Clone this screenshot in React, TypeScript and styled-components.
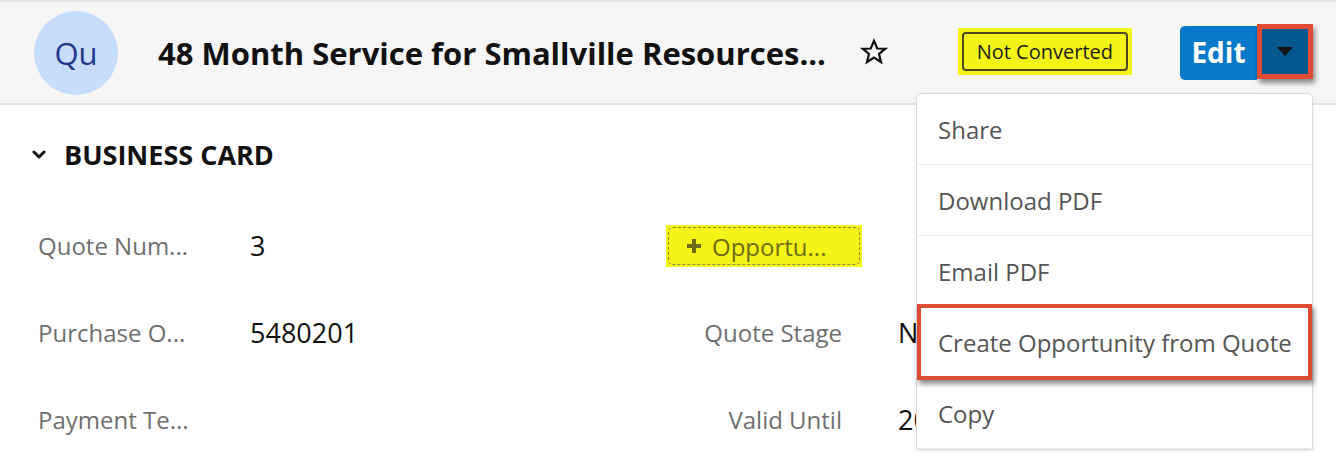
import styled, { createGlobalStyle } from 'styled-components';

const Global = createGlobalStyle`
  html, body { margin: 0; padding: 0; background: #fff; }
  body { font-family: "Open Sans", "Noto Sans", sans-serif; overflow: hidden; }
`;

const MENU = ['Share', 'Download PDF', 'Email PDF', 'Create Opportunity from Quote', 'Copy'];
const FLAGGED = 'Create Opportunity from Quote';

export default function App() {
  return (
    <Page>
      <Global />
      <Header>
        <Avatar>Qu</Avatar>
        <Title>48 Month Service for Smallville Resources...</Title>
        <StarButton aria-label="Favorite">
          <svg width="28" height="28" viewBox="0 0 24 24" fill="none" stroke="#111" strokeWidth="1.9" strokeLinejoin="miter">
            <polygon points="12,2.5 14.8,9 21.5,9.3 16.3,13.6 18,20.6 12,16.7 6,20.6 7.7,13.6 2.5,9.3 9.2,9" />
          </svg>
        </StarButton>
        <Spacer />
        <Highlight>
          <Badge>Not Converted</Badge>
        </Highlight>
        <EditGroup>
          <EditButton>Edit</EditButton>
          <Toggle>
            <svg width="16" height="9" viewBox="0 0 16 9"><polygon points="0,0 16,0 8,9" fill="#111" /></svg>
          </Toggle>
        </EditGroup>
      </Header>

      <Body>
        <SectionTitle>
          <svg width="14" height="9" viewBox="0 0 14 9" fill="none" stroke="#111" strokeWidth="3" strokeLinecap="round" strokeLinejoin="round">
            <polyline points="2,2 7,7 12,2" />
          </svg>
          BUSINESS CARD
        </SectionTitle>
        <Fields>
          <Label>Quote Num...</Label>
          <Value>3</Value>
          <RelateCell>
            <RelateMark>
              <RelatePill>
                <svg width="14" height="14" viewBox="0 0 14 14"><path d="M5 0h4v5h5v4H9v5H5V9H0V5h5z" fill="#6d6c12" /></svg>
                Opportu...
              </RelatePill>
            </RelateMark>
          </RelateCell>

          <Label>Purchase O...</Label>
          <Value>5480201</Value>
          <Label $right>Quote Stage</Label>
          <Value $side>Negotiation</Value>

          <Label>Payment Te...</Label>
          <Value />
          <Label $right>Valid Until</Label>
          <Value $side>2020-01-01</Value>
        </Fields>
      </Body>

      <Menu>
        {MENU.map(item => (
          <MenuItem key={item} $flagged={item === FLAGGED}>{item}</MenuItem>
        ))}
      </Menu>
    </Page>
  );
}

const Page = styled.div`
  position: relative;
  width: 1336px;
  height: 452px;
  overflow: hidden;
  background: #fff;
`;

const Header = styled.header`
  display: flex;
  align-items: center;
  height: 101px;
  padding: 0 23px 0 34px;
  background: #f6f6f6;
  border-top: 2px solid #dfe2e6;
  border-bottom: 2px solid #e2e2e2;
`;

const Avatar = styled.div`
  display: flex;
  align-items: center;
  justify-content: center;
  flex: none;
  width: 84px;
  height: 84px;
  border-radius: 50%;
  background: #c7ddfb;
  color: #25378a;
  font-size: 31px;
  margin-right: 40px;
`;

const Title = styled.h1`
  margin: 0;
  font-size: 31px;
  font-weight: 700;
  color: #111;
  white-space: nowrap;
`;

const StarButton = styled.span`
  display: inline-flex;
  margin-left: 34px;
  margin-top: -2px;
`;

const Spacer = styled.div`
  flex: 1;
`;

const Highlight = styled.div`
  background: #f4f516;
  padding: 4px;
  margin-right: 48px;
  margin-top: -2px;
`;

const Badge = styled.div`
  display: flex;
  align-items: center;
  height: 35px;
  padding: 0 13px;
  border: 2px solid #4c4a1c;
  border-radius: 4px;
  font-size: 20px;
  color: #1d1d10;
`;

const EditGroup = styled.div`
  display: flex;
  align-items: stretch;
  height: 54px;
`;

const EditButton = styled.button`
  width: 77px;
  border: none;
  border-radius: 5px 0 0 5px;
  background: #0679c8;
  color: #fff;
  font-family: inherit;
  font-size: 28px;
  font-weight: 700;
  padding: 0 0 2px;
`;

const Toggle = styled.button`
  display: flex;
  align-items: center;
  justify-content: center;
  width: 56px;
  margin: -2px 0 1px;
  padding: 0;
  border: 5px solid #e04b34;
  background: #04578f;
  box-shadow: 2px 4px 5px rgba(0, 0, 0, 0.45);
`;

const Body = styled.main`
  padding: 29px 0 0 32px;
`;

const SectionTitle = styled.h2`
  display: flex;
  align-items: center;
  gap: 18px;
  height: 40px;
  margin: 0 0 28px;
  font-size: 27px;
  font-weight: 700;
  color: #111;
`;

const Fields = styled.div`
  display: grid;
  grid-template-columns: 212px 380px 212px 74px;
  grid-auto-rows: 87px;
  align-items: center;
  padding-left: 6px;
`;

const Label = styled.div<{ $right?: boolean }>`
  font-size: 24px;
  color: #6f6f6f;
  text-align: ${p => (p.$right ? 'right' : 'left')};
  white-space: nowrap;
`;

const Value = styled.div<{ $side?: boolean }>`
  font-size: 27px;
  color: #111;
  padding-left: ${p => (p.$side ? '56px' : '0')};
  white-space: nowrap;
  overflow: hidden;
`;

const RelateCell = styled.div`
  grid-column: 3 / span 2;
  padding-left: 36px;
  margin-top: 1px;
`;

const RelateMark = styled.div`
  display: inline-block;
  background: #f4f516;
  padding: 2px;
`;

const RelatePill = styled.div`
  display: flex;
  align-items: center;
  gap: 11px;
  width: 192px;
  height: 38px;
  box-sizing: border-box;
  padding-left: 18px;
  border: 1.5px dashed #8c8b45;
  border-radius: 5px;
  font-size: 24px;
  color: #6d6c12;
`;

const Menu = styled.ul`
  position: absolute;
  top: 93px;
  left: 916px;
  width: 395px;
  margin: 0;
  padding: 0;
  list-style: none;
  background: #fff;
  border: 1px solid #dadada;
  border-radius: 5px 5px 0 0;
  box-shadow: 0 2px 6px rgba(0, 0, 0, 0.08);
`;

const MenuItem = styled.li<{ $flagged?: boolean }>`
  position: relative;
  display: flex;
  align-items: center;
  height: 70px;
  padding-left: 21px;
  border-bottom: 1px solid #eeeeee;
  font-size: 24px;
  color: #555;
  white-space: nowrap;

  ${p =>
    p.$flagged &&
    `
    &::after {
      content: '';
      position: absolute;
      top: -3px;
      bottom: -3px;
      left: 0;
      right: 0;
      border: 4px solid #e04b34;
      box-shadow: 2px 4px 5px rgba(0, 0, 0, 0.45);
    }
  `}
`;
